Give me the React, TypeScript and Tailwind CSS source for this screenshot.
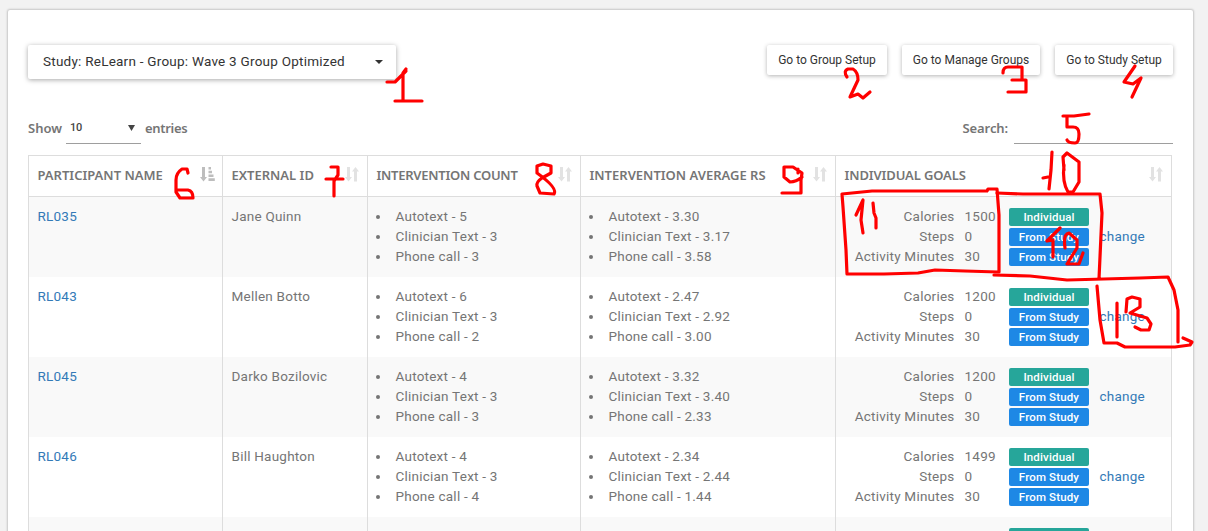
import React from 'react';

type Participant = {
  id: string;
  name: string;
  counts: [string, string, string];
  averages: [string, string, string];
  calories: string;
};

const participants: Participant[] = [
  { id: 'RL035', name: 'Jane Quinn', counts: ['5', '3', '3'], averages: ['3.30', '3.17', '3.58'], calories: '1500' },
  { id: 'RL043', name: 'Mellen Botto', counts: ['6', '3', '2'], averages: ['2.47', '2.92', '3.00'], calories: '1200' },
  { id: 'RL045', name: 'Darko Bozilovic', counts: ['4', '3', '3'], averages: ['3.32', '3.40', '2.33'], calories: '1200' },
  { id: 'RL046', name: 'Bill Haughton', counts: ['4', '3', '4'], averages: ['2.34', '2.44', '1.44'], calories: '1499' },
  { id: 'RL047', name: 'Paul Wood', counts: ['4', '3', '4'], averages: ['2.34', '2.44', '1.44'], calories: '1200' },
];

const columns = [
  { title: 'PARTICIPANT NAME', tracking: '' },
  { title: 'EXTERNAL ID', tracking: '' },
  { title: 'INTERVENTION COUNT', tracking: 'tracking-[-0.26px] ' },
  { title: 'INTERVENTION AVERAGE RS', tracking: '' },
  { title: 'INDIVIDUAL GOALS', tracking: 'tracking-[-0.12px] ' },
];
const interventions = ['Autotext', 'Clinician Text', 'Phone call'];
const grid = 'grid grid-cols-[194px_145px_213px_255px_337px] ';
const cell = 'border-l border-[#ddd] last:border-r ';

function SortIcon({ active }: { active: boolean }) {
  return active ? (
    <svg width="15" height="15" viewBox="0 0 15 15" fill="#bdbdbd" className="mb-px shrink-0">
      <path d="M2 0h3v10h2L3.5 14.5 0 10h2z" />
      <path d="M8.500 0h2.500v2.500H8.500zM8.500 3.800h3.500v2.400H8.500zM8.500 7.500h5v2.500H8.500zM8.500 11.200h6.300v2.800H8.500z" />
    </svg>
  ) : (
    <svg width="15" height="15" viewBox="0 0 15 15" fill="#e2e2e2" className="mb-px shrink-0">
      <path d="M2 0h3v10h2L3.5 14.5 0 10h2z" />
      <path d="M9 14.5h3v-10h2L10.500 0 7 4.500h2z" />
    </svg>
  );
}

function Interventions({ values }: { values: string[] }) {
  return (
    <ul className="pt-[10px]">
      {interventions.map((label, i) => (
        <li key={label} className="flex h-5 items-center">
          <span className="mr-[15.5px] ml-2 size-1 rounded-full bg-[#757575]" />
          <span className="mb-0.5">
            {label} - {values[i]}
          </span>
        </li>
      ))}
    </ul>
  );
}

function Goals({ calories }: { calories: string }) {
  const rows = [
    ['Calories', calories, 'Individual'],
    ['Steps', '0', 'From Study'],
    ['Activity Minutes', '30', 'From Study'],
  ];
  return (
    <div className="flex pt-[10px]">
      <div>
        {rows.map(([label, value, source]) => (
          <div key={label} className="flex h-5 items-center">
            <span className="mb-0.5 w-[118.5px] text-right">{label}</span>
            <span className="mb-0.5 ml-2.5 w-[44.5px]">{value}</span>
            <span
              className={
                'h-[18px] w-20 rounded-xs text-center text-[11.5px] leading-[18px] font-medium tracking-[0.15px] text-white ' +
                (source === 'Individual' ? 'bg-[#26a69a]' : 'bg-[#1e88e5]')
              }
            >
              {source}
            </span>
          </div>
        ))}
      </div>
      <a className="mb-0.5 ml-[10.5px] self-center text-[#337ab7]">change</a>
    </div>
  );
}

const strokes = [
  'M387 82L395 82L406 71M406 69L403 73V100M395 101H422',
  'M847 77Q843 71 848 69L853 69Q858 72 858 80L850 97L858 94L863 98L870 92',
  'M1003 73Q1003 67 1008 67H1022V80M1012 80H1026V92H1008',
  'M1135 66L1124 82L1133 84L1141 78L1132 97',
  'M1063 116L1074 116L1089 114M1067 117V127H1073Q1079 127 1079 134Q1079 143 1075 143Q1068 143 1067 140',
  'M188 173L187 169H182Q176 173 176 180V192L180 198H193Q193 191 188 190H177',
  'M331 167H338V175L334 181V196M326 179H343',
  'M537 173V166L543 164L551 166L551 173L542 178Q536 182 537 186L540 193L554 194Q558 188 537 173',
  'M802 177Q796 182 790 182L784 177V167H793L802 173L801 180V193H782M798 169V173',
  'M1052 152L1051 170L1049 189M1043 178L1048 177',
  'M1064 170L1063 157L1067 153L1079 162V182L1073 192H1068Q1062 182 1064 165',
  'M847 274L846 250L843 207L842 194L852 193L872 191L960 191L987 191L988 189H997L999 215L999 272M847 274H884L918 273L935 270L965 271L998 272',
  'M997 193L1023 194L1100 194L1102 213L1099 279M994 275L1030 276L1067 280L1140 278L1168 277L1174 290L1178 310L1178 342',
  'M856 215L863 200L861 220L863 233M873 203L874 213L876 218V228',
  'M1060 228L1047 241L1053 240V257M1065 248Q1063 234 1069 233L1077 240V248L1067 264H1079L1083 253',
  'M1097 286L1100 320L1104 343H1117L1125 347H1175L1190 345L1192 342L1183 338',
  'M1117 303V337M1126 312L1127 299L1132 297L1140 299L1140 307L1130 313L1147 318L1151 324L1149 330H1141L1135 327',
];

function Toolbar() {
  const button =
    'h-[30px] rounded-xs bg-white text-[12px] leading-[30px] text-[#333] shadow-[0_1px_4px_rgba(0,0,0,0.3)] text-center ';
  return (
    <div className="flex items-start justify-between">
      <button className="flex h-[34px] w-[368px] items-center justify-between rounded-xs bg-white px-[15px] text-[13.5px] tracking-[0.24px] text-[#333] shadow-[0_1px_5px_rgba(0,0,0,0.35)]">
        <span className="mb-0.5">Study: ReLearn - Group: Wave 3 Group Optimized</span>
        <span className="mr-[-2px] border-x-4 border-t-4 border-x-transparent border-t-[#333]" />
      </button>
      <div className="flex gap-[15px]">
        <button className={button + 'w-[120px]'}>Go to Group Setup</button>
        <button className={button + 'w-[138px]'}>Go to Manage Groups</button>
        <button className={button + 'w-[118px]'}>Go to Study Setup</button>
      </div>
    </div>
  );
}

export default function App() {
  return (
    <div className="relative h-[531px] w-[1208px] overflow-hidden bg-[#f2f2f2] pt-[10px] pl-2 font-['Roboto',sans-serif] text-[13.5px] leading-5 text-[#757575]">
      <div className="h-[600px] w-[1185px] rounded-xs bg-white px-5 pt-[35px] shadow-[0_0_2px_1px_rgba(0,0,0,0.18)]">
        <Toolbar />
        <div className="mt-[34px] flex h-[42px] w-[1145px] justify-between font-['Noto_Sans',sans-serif] text-[13px] font-semibold">
          <div className="flex h-[31px] items-center">
            <span className="mb-0.5">Show</span>
            <span className="ml-1 flex h-[31px] w-[75px] items-center justify-between border-b border-[#9e9e9e] pr-1 pl-1 font-['Roboto',sans-serif] text-[11px] font-medium tracking-[-0.3px] text-[#444]">
              10
              <svg width="7" height="6" viewBox="0 0 7 6" className="mr-0.5">
                <path d="M0 0h7L3.500 6z" fill="#444" />
              </svg>
            </span>
            <span className="mb-0.5 ml-1 tracking-[-0.3px]">entries</span>
          </div>
          <div className="flex h-[31px] items-center">
            <span className="mb-0.5 tracking-[-0.1px]">Search:</span>
            <span className="ml-1.5 h-[31px] w-[159px] border-b border-[#9e9e9e]" />
          </div>
        </div>
        <div className="w-[1144px] border-t border-[#ddd]">
          <div className={grid + "h-[41px] border-b border-[#ddd] font-['Noto_Sans',sans-serif] text-[13px] font-semibold"}>
            {columns.map(({ title, tracking }, i) => (
              <div
                key={title}
                className={cell + tracking + 'flex items-center justify-between pr-[7px] pb-0.5 pl-[8.5px] whitespace-nowrap'}
              >
                {title}
                <SortIcon active={i === 0} />
              </div>
            ))}
          </div>
          {participants.map((p) => (
            <div key={p.id} className={grid + 'h-20 tracking-[0.23px] odd:bg-white even:bg-[#f9f9f9]'}>
              <div className={cell + 'pt-[9px] pl-[8.5px] text-[#337ab7]'}>{p.id}</div>
              <div className={cell + 'pt-[9px] pl-[8.5px]'}>{p.name}</div>
              <div className={cell}>
                <Interventions values={p.counts} />
              </div>
              <div className={cell}>
                <Interventions values={p.averages} />
              </div>
              <div className={cell}>
                <Goals calories={p.calories} />
              </div>
            </div>
          ))}
        </div>
      </div>
      <svg className="pointer-events-none absolute inset-0" width="1208" height="531" fill="none" stroke="#f00" strokeWidth="3.2" strokeLinecap="round" strokeLinejoin="round">
        {strokes.map((d) => (
          <path key={d} d={d} />
        ))}
      </svg>
    </div>
  );
}
